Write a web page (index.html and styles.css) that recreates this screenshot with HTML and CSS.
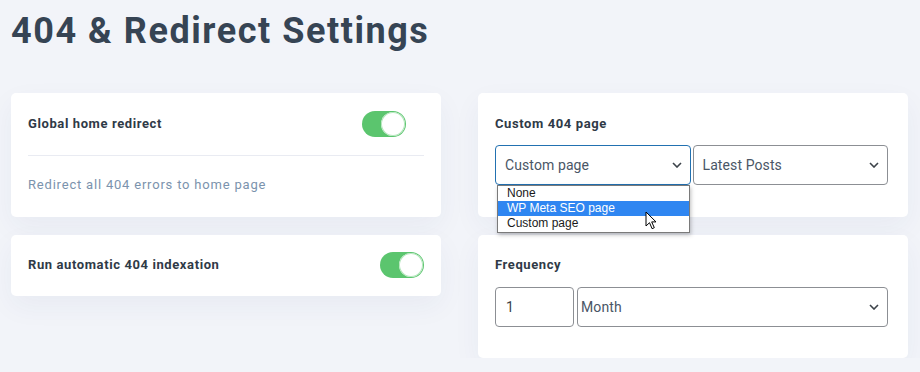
FILE: index.html
```html
<!DOCTYPE html>
<html lang="en">
<head>
  <meta charset="UTF-8" />
  <title>404 &amp; Redirect Settings</title>
  <link rel="stylesheet" href="styles.css">
</head>
<body>
  <h1>404 &amp; Redirect Settings</h1>

  <div class="columnas">
    <div class="columna">
      <div class="tarjeta tarjeta-home">
        <div class="fila">
          <span class="etiqueta">Global home redirect</span>
          <span class="interruptor interruptor-corto"><span class="bola"></span></span>
        </div>
        <div class="separador"></div>
        <p class="descripcion">Redirect all 404 errors to home page</p>
      </div>

      <div class="tarjeta tarjeta-index">
        <div class="fila">
          <span class="etiqueta">Run automatic 404 indexation</span>
          <span class="interruptor"><span class="bola"></span></span>
        </div>
      </div>
    </div>

    <div class="columna">
      <div class="tarjeta tarjeta-form">
        <div class="etiqueta">Custom 404 page</div>
        <div class="campos">
          <div class="selector selector-activo">
            <span>Custom page</span>
            <svg class="flecha" width="10" height="6" viewBox="0 0 10 6"><path d="M1 1l4 4 4-4" fill="none" stroke="#3c434a" stroke-width="1.6"/></svg>
            <ul class="desplegable">
              <li>None</li>
              <li class="marcado">WP Meta SEO page</li>
              <li>Custom page</li>
            </ul>
            <svg class="cursor" width="13" height="19" viewBox="0 0 13 19"><path d="M1 1v14l3.5-3.3 2.6 6 2.2-1-2.6-5.8H11z" fill="#fff" stroke="#000" stroke-width="1"/></svg>
          </div>
          <div class="selector">
            <span>Latest Posts</span>
            <svg class="flecha" width="10" height="6" viewBox="0 0 10 6"><path d="M1 1l4 4 4-4" fill="none" stroke="#3c434a" stroke-width="1.6"/></svg>
          </div>
        </div>
      </div>

      <div class="tarjeta tarjeta-form tarjeta-freq">
        <div class="etiqueta">Frequency</div>
        <div class="campos campos-freq">
          <div class="numero">1</div>
          <div class="selector selector-mes">
            <span>Month</span>
            <svg class="flecha" width="10" height="6" viewBox="0 0 10 6"><path d="M1 1l4 4 4-4" fill="none" stroke="#3c434a" stroke-width="1.6"/></svg>
          </div>
        </div>
      </div>
    </div>
  </div>
</body>
</html>
```

FILE: styles.css
```css
body {
  font-family: Roboto, "Liberation Sans", sans-serif;
  background-color: #f2f4f9;
  margin: 0;
  padding: 0 12px 0 11px;
  color: #2f3a47;
}
h1 {
  margin: 13px 0 44px;
  font-size: 36px;
  line-height: 36px;
  font-weight: 700;
  letter-spacing: 1.55px;
  color: #364454;
}
.columnas {
  display: grid;
  grid-template-columns: 430px 430px;
  gap: 37px;
  align-items: start;
}
.columna {
  display: flex;
  flex-direction: column;
  gap: 18px;
}
.tarjeta {
  background: white;
  border-radius: 5px;
  box-shadow: 0 10px 28px rgba(40, 50, 110, 0.05);
}
.tarjeta-home {
  padding: 18px 17px 22px;
}
.tarjeta-index {
  padding: 17px 17px 18px;
}
.fila {
  display: flex;
  align-items: center;
  justify-content: space-between;
  height: 26px;
}
.etiqueta {
  font-size: 13px;
  font-weight: 700;
  letter-spacing: 0.6px;
  line-height: 20px;
  color: #2f3a47;
}
.interruptor {
  width: 44px;
  height: 26px;
  border-radius: 13px;
  background: #5bc56e;
  display: flex;
  align-items: center;
  justify-content: flex-end;
  padding-right: 1px;
  box-sizing: border-box;
}
.interruptor-corto {
  margin-right: 18px;
}
.bola {
  width: 24px;
  height: 24px;
  border-radius: 50%;
  background: white;
  box-shadow: inset 0 0 0 1px #b5e6bd;
}
.separador {
  height: 1px;
  background: #e9ebf2;
  margin-top: 18px;
}
.descripcion {
  margin: 19px 0 0;
  font-size: 13px;
  line-height: 20px;
  letter-spacing: 0.8px;
  color: #7b93ad;
}
.tarjeta-form {
  padding: 21px 20px 32px 17px;
}
.tarjeta-freq {
  padding-top: 20px;
  padding-bottom: 31px;
}
.campos {
  display: flex;
  gap: 2px;
  margin-top: 11px;
}
.campos-freq {
  margin-top: 12px;
  gap: 3px;
}
.selector {
  position: relative;
  flex: 1;
  height: 40px;
  border: 1px solid #8c8f94;
  border-radius: 4px;
  box-sizing: border-box;
  display: flex;
  align-items: center;
  justify-content: space-between;
  padding: 0 8px 0 9px;
  font-size: 14px;
  letter-spacing: 0.1px;
  color: #4a5666;
}
.selector-activo {
  border-color: #2271b1;
}
.selector-mes {
  padding-left: 3px;
}
.flecha {
  flex-shrink: 0;
}
.numero {
  width: 79px;
  height: 40px;
  border: 1px solid #8c8f94;
  border-radius: 4px;
  box-sizing: border-box;
  padding-left: 10px;
  display: flex;
  align-items: center;
  font-size: 14px;
  color: #3c434a;
}
.desplegable {
  position: absolute;
  top: 39px;
  left: 1px;
  right: 0;
  margin: 0;
  padding: 0 0 1px;
  list-style: none;
  background: white;
  border: 1px solid #7a7a7a;
  box-shadow: 1px 2px 4px rgba(0, 0, 0, 0.25);
  font-family: "Liberation Sans", Arial, sans-serif;
  font-size: 12px;
  letter-spacing: 0;
  color: #1a1a1a;
  z-index: 2;
}
.desplegable li {
  height: 15px;
  line-height: 15px;
  padding-left: 9px;
}
.desplegable .marcado {
  background: #2f86f1;
  color: white;
}
.cursor {
  position: absolute;
  left: 149px;
  top: 65px;
  z-index: 3;
}
```
